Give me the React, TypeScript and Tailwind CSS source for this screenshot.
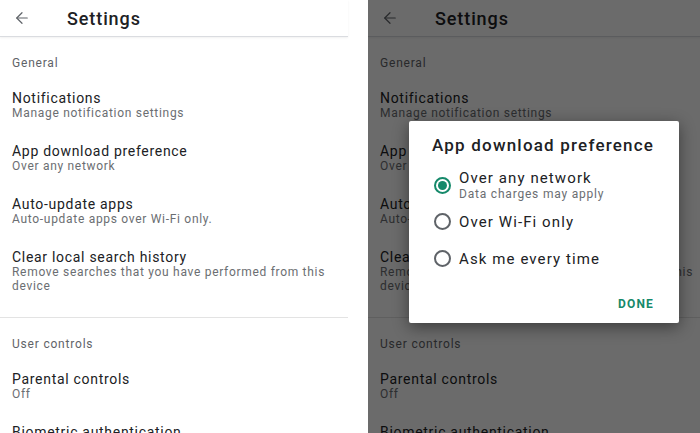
import { ArrowLeft } from 'lucide-react'

const general = [
  ['Notifications', 'Manage notification settings'],
  ['App download preference', 'Over any network'],
  ['Auto-update apps', 'Auto-update apps over Wi-Fi only.'],
]

function Item({ title, sub }: { title: string; sub: string }) {
  return (
    <div className="h-[53px] px-3 pt-[10px]">
      <div className="text-[14px] leading-4 tracking-[0.7px] text-[#202124]">{title}</div>
      <div className="text-[12px] leading-[14px] tracking-[0.7px] text-[#6b6e72]">{sub}</div>
    </div>
  )
}

function SettingsPage() {
  return (
    <div className="h-[433px] w-[348px] shrink-0 bg-white font-['Roboto',sans-serif]">
      <header className="flex h-[37px] items-center border-b border-[#dadce0] shadow-[0_1px_2px_rgba(0,0,0,0.06)]">
        <ArrowLeft size={18} strokeWidth={1.6} className="ml-[13px] text-[#5f6368]" />
        <h1 className="ml-[36px] text-[18px] font-medium tracking-[0.9px] text-[#202124]">Settings</h1>
      </header>
      <p className="h-[43px] px-3 pt-[19px] text-[12px] leading-[14px] tracking-[0.8px] text-[#5f6368]">General</p>
      {general.map(([t, s]) => (
        <Item key={t} title={t} sub={s} />
      ))}
      <div className="h-[78px] px-3 pt-[10px]">
        <div className="text-[14px] leading-4 tracking-[0.7px] text-[#202124]">Clear local search history</div>
        <div className="text-[12px] leading-[14px] tracking-[0.7px] text-[#6b6e72]">
          Remove searches that you have performed from this device
        </div>
      </div>
      <div className="h-px bg-[#e3e3e3]" />
      <p className="h-[43px] px-3 pt-[19px] text-[12px] leading-[14px] tracking-[0.8px] text-[#5f6368]">User controls</p>
      <Item title="Parental controls" sub="Off" />
      <Item title="Biometric authentication" sub="" />
    </div>
  )
}

function Radio({ on }: { on?: boolean }) {
  return (
    <span
      className={
        on
          ? 'flex size-[17px] shrink-0 items-center justify-center rounded-full border-2 border-[#15896a]'
          : 'flex size-[17px] shrink-0 items-center justify-center rounded-full border-2 border-[#5f6368]'
      }
    >
      {on && <span className="size-[9px] rounded-full bg-[#15896a]" />}
    </span>
  )
}

export default function App() {
  return (
    <div className="flex h-[433px] w-[700px] overflow-hidden bg-white">
      <SettingsPage />
      <div className="relative ml-[20px] h-[433px] flex-1 overflow-hidden">
        <SettingsPage />
        <div className="absolute inset-0 bg-black/[0.58]" />
        <div className="absolute left-[41px] top-[121px] h-[202px] w-[270px] rounded-[2px] bg-white font-['Roboto',sans-serif] shadow-[0_4px_16px_rgba(0,0,0,0.45)]">
          <h2 className="px-[23px] pt-[14px] text-[17px] font-medium leading-5 tracking-[1.2px] text-[#202124]">
            App download preference
          </h2>
          <div className="mt-[15px] flex items-start gap-[8px] pl-[25px]">
            <span className="mt-[7px]">
              <Radio on />
            </span>
            <div>
              <div className="text-[15px] leading-4 tracking-[1.1px] text-[#202124]">Over any network</div>
              <div className="mt-px text-[12px] leading-[14px] tracking-[0.8px] text-[#6b6e72]">
                Data charges may apply
              </div>
            </div>
          </div>
          <div className="mt-[12px] flex items-center gap-[8px] pl-[25px]">
            <Radio />
            <span className="text-[15px] leading-4 tracking-[1.1px] text-[#202124]">Over Wi-Fi only</span>
          </div>
          <div className="mt-[20px] flex items-center gap-[8px] pl-[25px]">
            <Radio />
            <span className="text-[15px] leading-4 tracking-[1.1px] text-[#202124]">Ask me every time</span>
          </div>
          <div className="mt-[30px] pr-[25px] text-right text-[12px] font-bold leading-[14px] tracking-[1.2px] text-[#15896a]">
            DONE
          </div>
        </div>
      </div>
    </div>
  )
}
